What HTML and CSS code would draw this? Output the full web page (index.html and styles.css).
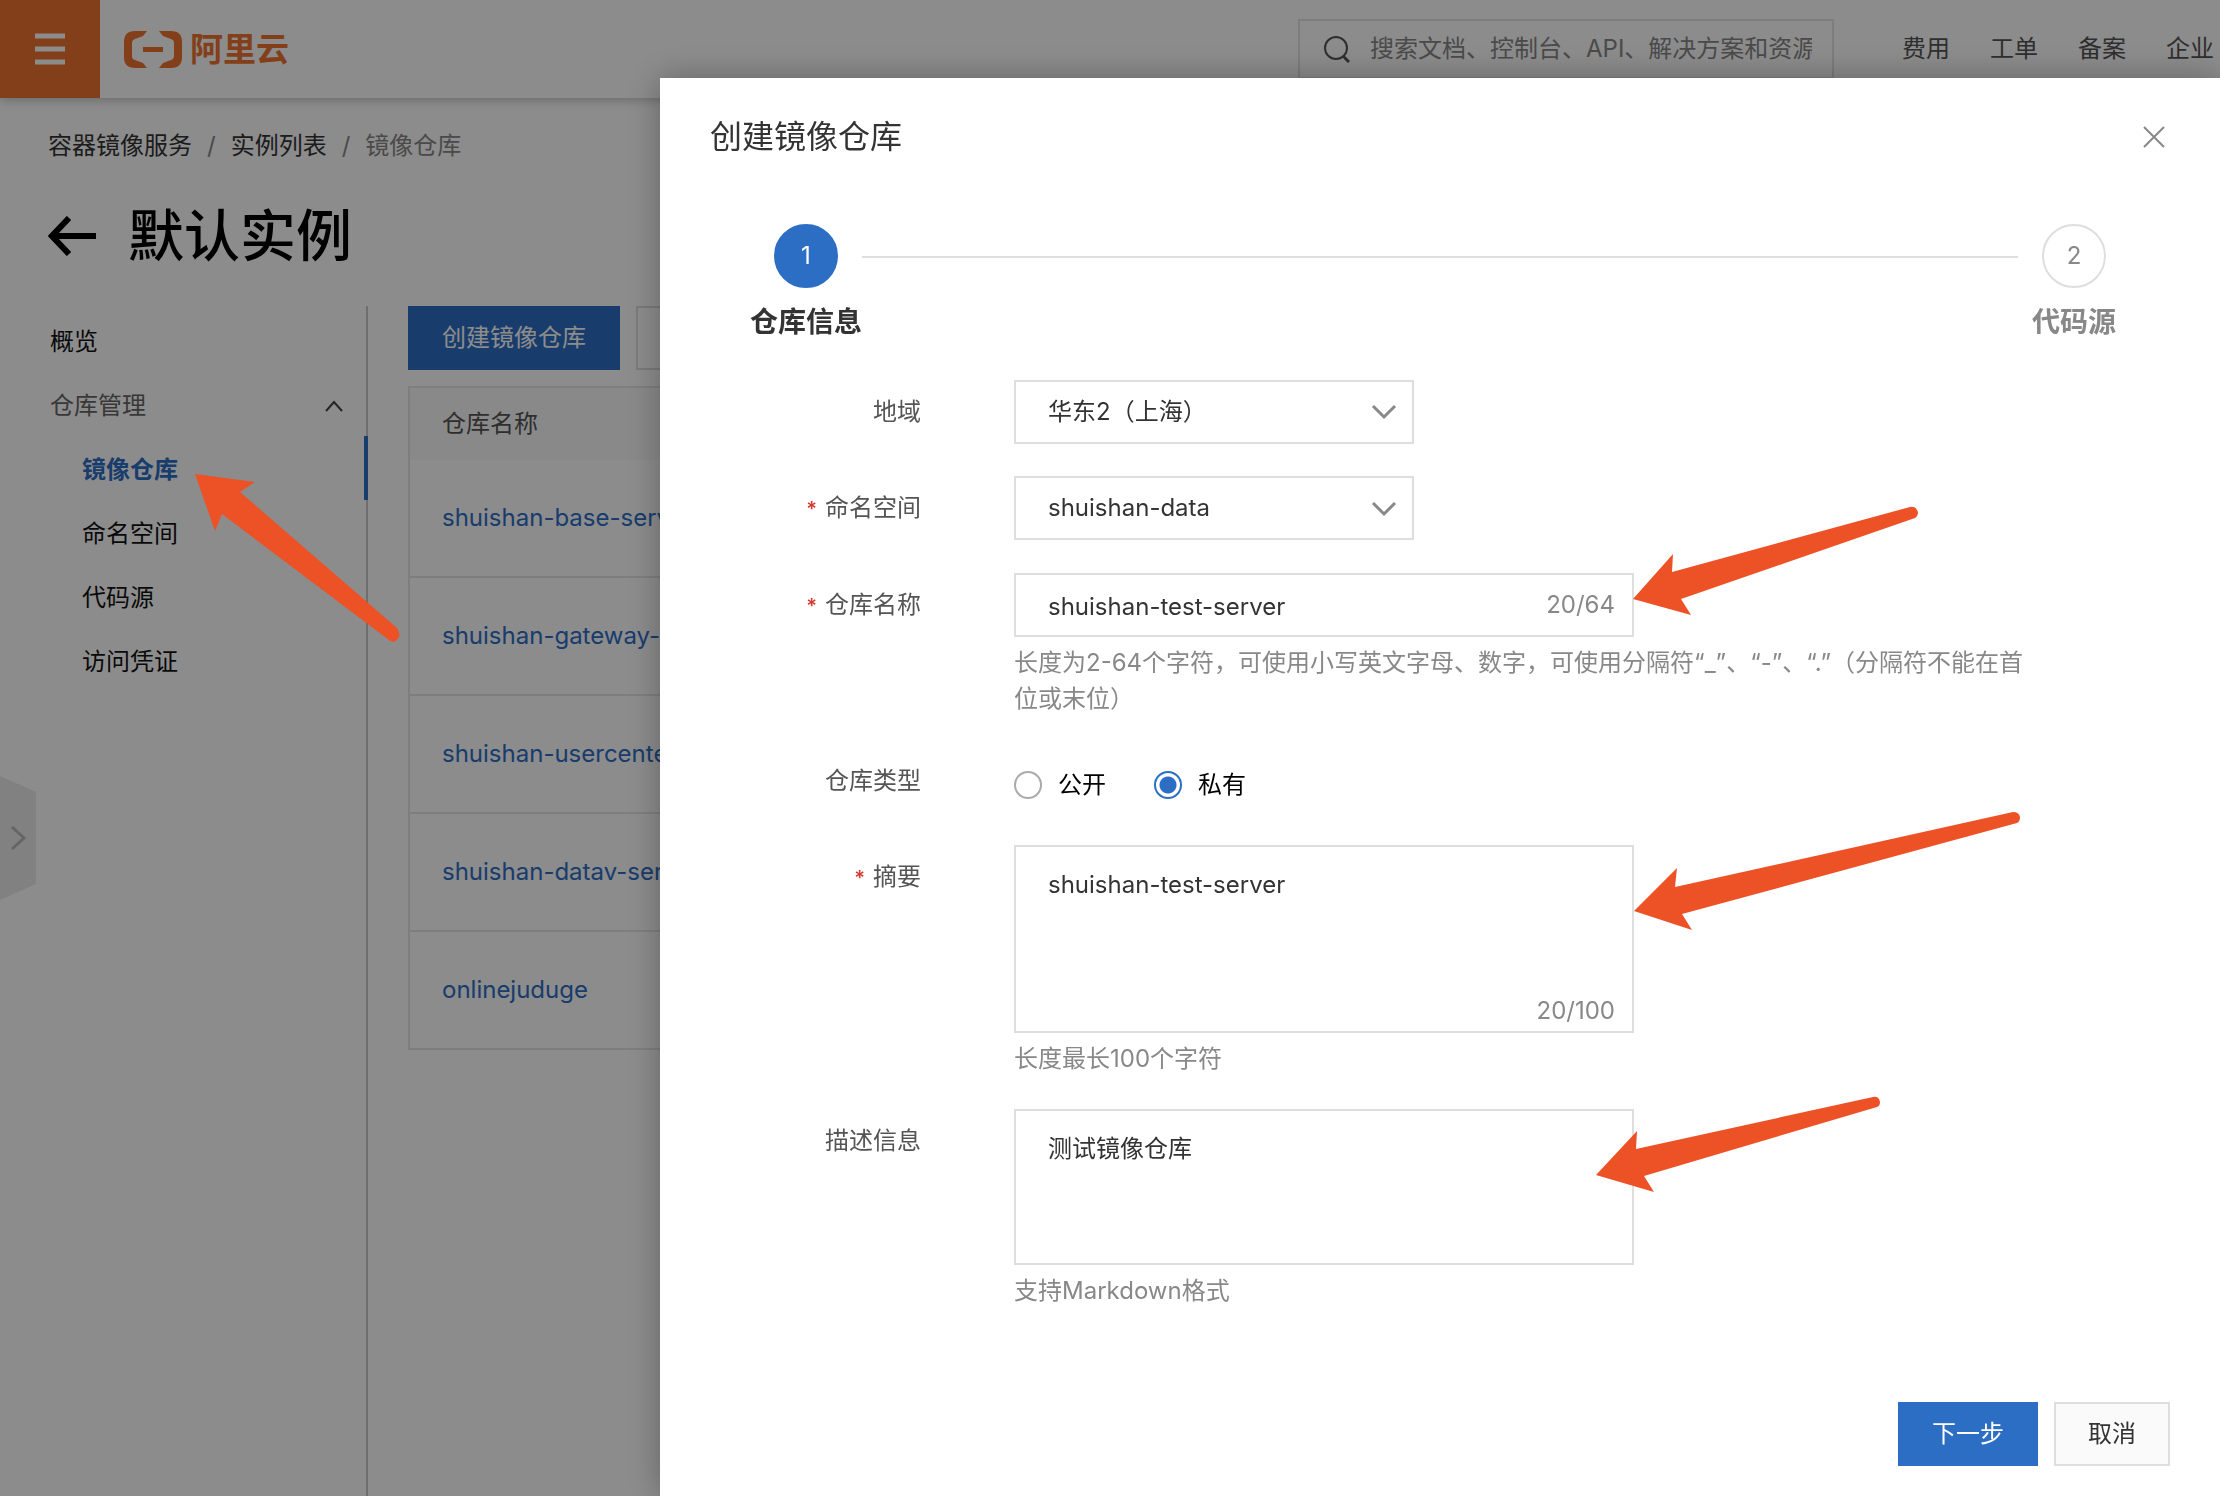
FILE: index.html
```html
<!DOCTYPE html>
<html lang="zh-CN">
<head>
<meta charset="utf-8">
<title>创建镜像仓库</title>
<link rel="stylesheet" href="styles.css">
</head>
<body>
<div class="page">
  <header class="topbar">
    <button class="menu-btn" type="button" aria-label="菜单">
      <svg width="30" height="32" viewBox="0 0 30 32"><path d="M0 3h30M0 16h30M0 29h30" stroke="#fff" stroke-width="5"/></svg>
    </button>
    <a class="logo" href="#">
      <svg width="58" height="37" viewBox="0 0 58 37" fill="#ee7431"><path d="M23 0H11Q0 0 0 11V26Q0 37 11 37H23L19 32L11 29Q8 28 8 25V12Q8 9 11 8L19 5Z"/><path d="M35 0H47Q58 0 58 11V26Q58 37 47 37H35L39 32L47 29Q50 28 50 25V12Q50 9 47 8L39 5Z"/><path d="M19 16h20v5H19z"/></svg>
      <span>阿里云</span>
    </a>
    <label class="search">
      <svg width="26" height="28" viewBox="0 0 26 28" fill="none" stroke="#555" stroke-width="2"><circle cx="12" cy="13" r="11"/><path d="M19 21l6 6" stroke-width="3"/></svg>
      <input type="text" aria-label="搜索" placeholder="搜索文档、控制台、API、解决方案和资源">
    </label>
    <nav class="topnav">
      <a href="#">费用</a><a href="#">工单</a><a href="#">备案</a><a href="#">企业</a>
    </nav>
  </header>

  <nav class="crumbs">
    <a href="#">容器镜像服务</a><span>/</span><a href="#">实例列表</a><span>/</span><span>镜像仓库</span>
  </nav>
  <div class="heading">
    <a href="#" aria-label="返回"><svg width="48" height="40" viewBox="0 0 48 40" fill="none" stroke="#000" stroke-width="6"><path d="M21 2L4 20L21 38M4 20H48"/></svg></a>
    <h1>默认实例</h1>
  </div>

  <div class="body">
    <nav class="side">
      <a href="#">概览</a>
      <a href="#" class="group">仓库管理
        <svg width="18" height="12" viewBox="0 0 18 12" fill="none" stroke="#444" stroke-width="2"><path d="M1 11L9 2L17 11"/></svg>
      </a>
      <a href="#" class="sub active">镜像仓库</a>
      <a href="#" class="sub">命名空间</a>
      <a href="#" class="sub">代码源</a>
      <a href="#" class="sub">访问凭证</a>
    </nav>
    <main class="content">
      <div class="actions">
        <button class="btn primary" type="button">创建镜像仓库</button>
        <button class="btn ghost" type="button" aria-label="更多操作"></button>
      </div>
      <table class="repos">
        <thead><tr><th>仓库名称</th></tr></thead>
        <tbody>
          <tr><td><a href="#">shuishan-base-server</a></td></tr>
          <tr><td><a href="#">shuishan-gateway-server</a></td></tr>
          <tr><td><a href="#">shuishan-usercenter</a></td></tr>
          <tr><td><a href="#">shuishan-datav-server</a></td></tr>
          <tr><td><a href="#">onlinejuduge</a></td></tr>
        </tbody>
      </table>
    </main>
  </div>
  <button class="side-tab" type="button" aria-label="展开">
    <svg width="36" height="124" viewBox="0 0 36 124"><path d="M0 0L36 16V108L0 124Z" fill="#ebebeb"/><path d="M12 51L24 62L12 73" fill="none" stroke="#b8b8b8" stroke-width="3"/></svg>
  </button>
</div>

<div class="mask">
  <section class="drawer" role="dialog" aria-label="创建镜像仓库">
    <div class="drawer-head">
      <h2>创建镜像仓库</h2>
      <button class="close" type="button" aria-label="关闭"><svg width="22" height="22" viewBox="0 0 22 22" stroke="#888" stroke-width="2"><path d="M1 1L21 21M21 1L1 21"/></svg></button>
    </div>
    <div class="steps">
      <div class="step current"><span class="dot">1</span><span>仓库信息</span></div>
      <div class="line"></div>
      <div class="step"><span class="dot">2</span><span>代码源</span></div>
    </div>
    <form class="form">
      <div class="row">
        <label class="name" for="region">地域</label>
        <div class="pick">
          <select id="region"><option>华东2（上海）</option></select>
          <svg width="26" height="16" viewBox="0 0 26 16" fill="none" stroke="#888" stroke-width="3"><path d="M2 2L13 13L24 2"/></svg>
        </div>
      </div>
      <div class="row">
        <label class="name required" for="space">命名空间</label>
        <div class="pick">
          <select id="space"><option>shuishan-data</option></select>
          <svg width="26" height="16" viewBox="0 0 26 16" fill="none" stroke="#888" stroke-width="3"><path d="M2 2L13 13L24 2"/></svg>
        </div>
      </div>
      <div class="row">
        <label class="name required" for="repo">仓库名称</label>
        <div>
          <div class="box"><input id="repo" type="text" value="shuishan-test-server"><span class="count">20/64</span></div>
          <p class="help">长度为2-64个字符，可使用小写英文字母、数字，可使用分隔符“_”、“-”、“.”（分隔符不能在首位或末位）</p>
        </div>
      </div>
      <div class="row">
        <span class="name">仓库类型</span>
        <div class="radios">
          <label><input type="radio" name="kind">公开</label>
          <label><input type="radio" name="kind" checked>私有</label>
        </div>
      </div>
      <div class="row">
        <label class="name required" for="brief">摘要</label>
        <div>
          <div class="box"><textarea id="brief" class="tall">shuishan-test-server</textarea><span class="count">20/100</span></div>
          <p class="help">长度最长100个字符</p>
        </div>
      </div>
      <div class="row">
        <label class="name" for="desc">描述信息</label>
        <div>
          <div class="box"><textarea id="desc">测试镜像仓库</textarea></div>
          <p class="help">支持Markdown格式</p>
        </div>
      </div>
    </form>
    <div class="drawer-foot">
      <button class="btn primary" type="button">下一步</button>
      <button class="btn plain" type="button">取消</button>
    </div>
  </section>
</div>

<svg class="marks" width="2220" height="1496" viewBox="0 0 2220 1496" fill="#ed5126" aria-hidden="true">
  <path d="M195 474L255 482L240 492L397 628Q403 637 394 642Q391 642 389 640L222 514L215 531Z"/>
  <path d="M1633 599L1673 554L1672 572L1910 507Q1916 506 1918 512Q1918 516 1915 518L1681 599L1691 615Z"/>
  <path d="M1634 911L1677 868L1675 887L2013 812Q2019 812 2020 817Q2020 822 2017 823L1682 914L1692 930Z"/>
  <path d="M1596 1175L1637 1131L1636 1149L1873 1097Q1879 1096 1880 1102Q1880 1106 1877 1107L1644 1176L1654 1192Z"/>
</svg>
</body>
</html>
```
FILE: styles.css
```css
* { box-sizing: border-box; }
body {
  margin: 0;
  overflow: hidden;
  background: #fff;
  color: #333;
  font-family: Inter, "Noto Sans CJK SC", sans-serif;
  font-size: 24px;
  line-height: 36px;
  text-spacing-trim: space-all;
}
a { color: inherit; text-decoration: none; }
button, input, select, textarea { font: inherit; color: inherit; margin: 0; }
button { border: 0; background: none; padding: 0; }
h1, h2, p { margin: 0; }
svg { display: block; flex: none; }

.page { display: flex; flex-direction: column; min-height: 100vh; }

.topbar {
  display: flex;
  align-items: center;
  height: 98px;
  padding-right: 6px;
  box-shadow: 0 2px 10px rgba(0, 0, 0, .25);
}
.menu-btn {
  display: grid;
  place-items: center;
  width: 100px;
  height: 98px;
  background: #ee7431;
}
.logo {
  display: flex;
  align-items: center;
  gap: 8px;
  margin-left: 24px;
  color: #ee7431;
  font-size: 33px;
  font-weight: 700;
}
.search {
  display: flex;
  align-items: center;
  gap: 20px;
  width: 536px;
  height: 60px;
  margin: 0 68px 0 auto;
  padding: 0 20px 0 24px;
  border: 2px solid #e3e3e3;
}
.search input { flex: 1; min-width: 0; padding: 0; border: 0; background: none; }
.search input::placeholder { color: #888; opacity: 1; }
.topnav { display: flex; gap: 40px; color: #555; }

.crumbs { display: flex; gap: 15px; padding: 30px 48px 0; }
.crumbs span { color: #888; }
.heading { display: flex; align-items: center; gap: 32px; padding: 36px 48px 34px; color: #000; }
.heading h1 { font-size: 56px; font-weight: 500; line-height: 72px; }

.body { display: flex; flex: 1; }
.side { width: 368px; padding-top: 2px; border-right: 2px solid #c8c8c8; color: #111; flex: none; }
.side a {
  display: flex;
  align-items: center;
  justify-content: space-between;
  height: 64px;
  padding: 4px 23px 0 50px;
}
.side .group { color: #666; }
.side .sub { padding-left: 82px; }
.side .active {
  margin-right: -2px;
  border-right: 4px solid #2d6ec5;
  color: #2d6ec5;
  font-weight: 700;
}

.content { flex: 1; padding-left: 40px; }
.actions { display: flex; gap: 16px; margin-bottom: 16px; }
.btn { height: 64px; padding: 0 34px; }
.primary { background: #2d6ec5; color: #fff; }
.ghost { width: 150px; border: 2px solid #dedede; }
.plain { padding: 0 32px; border: 2px solid #dedede; background: #fafafa; }

.repos { width: 100%; border-collapse: separate; border-spacing: 0; border: 2px solid #e6e6e6; }
.repos th, .repos td { padding: 0 32px; text-align: left; font-weight: 400; }
.repos th { height: 72px; background: #fafafa; color: #555; }
.repos td { height: 118px; border-bottom: 2px solid #e6e6e6; color: #2d6ec5; }
.repos tr:last-child td { height: 116px; border-bottom: 0; }

.side-tab { position: absolute; left: 0; top: 776px; }

.mask {
  position: fixed;
  inset: 0;
  display: flex;
  padding: 78px 0 0 660px;
  background: rgba(0, 0, 0, .45);
}
.drawer {
  display: flex;
  flex: 1;
  flex-direction: column;
  background: #fff;
  box-shadow: 0 0 32px rgba(0, 0, 0, .3);
}
.drawer-head {
  display: flex;
  align-items: center;
  justify-content: space-between;
  padding: 35px 55px 37px 50px;
}
.drawer-head h2 { font-size: 32px; font-weight: 400; line-height: 48px; }

.steps { display: grid; grid-template-columns: 112px 1fr 112px; padding: 26px 90px 40px; }
.step {
  display: flex;
  flex-direction: column;
  align-items: center;
  gap: 16px;
  color: #888;
  font-size: 28px;
  font-weight: 700;
}
.dot {
  display: grid;
  place-items: center;
  width: 64px;
  height: 64px;
  border: 2px solid #dedede;
  border-radius: 50%;
  font-size: 24px;
  font-weight: 400;
}
.current { color: #333; }
.current .dot { border-color: #2d6ec5; background: #2d6ec5; color: #fff; }
.line { height: 2px; margin-top: 32px; background: #dedede; }

.form { display: flex; flex-direction: column; gap: 32px; padding-right: 180px; }
.row { display: grid; grid-template-columns: 261px 1fr; column-gap: 93px; }
.name { line-height: 64px; color: #555; text-align: right; }
.required::before { content: "*"; margin-right: 8px; color: #d33a2c; font-size: 20px; font-weight: 600; }

.pick, .box { display: grid; }
.pick { width: 400px; }
.box { width: 620px; }
.pick > *, .box > * { grid-area: 1 / 1; }
.pick select, .box input, .box textarea {
  width: 100%;
  border: 2px solid #dedede;
  border-radius: 0;
  background: #fff;
  outline: 0;
}
.pick select { appearance: none; height: 64px; padding: 0 32px; }
.pick svg { place-self: center end; margin-right: 17px; pointer-events: none; }
.box input { height: 64px; padding: 2px 120px 0 32px; }
.box textarea { display: block; height: 156px; padding: 20px 32px; resize: none; }
.box .tall { height: 188px; }
.count { place-self: end; padding: 0 19px 14px 0; color: #888; line-height: 36px; }
.box .tall + .count { padding-bottom: 4px; }
.help { padding-top: 8px; color: #888; }

.radios { display: flex; align-items: center; gap: 48px; padding-top: 8px; color: #000; }
.radios label { display: flex; align-items: center; gap: 16px; }
.radios input {
  appearance: none;
  width: 28px;
  height: 28px;
  border: 2px solid #aaa;
  border-radius: 50%;
}
.radios input:checked {
  border-color: #2d6ec5;
  background: radial-gradient(circle, #2d6ec5 8px, #fff 9px);
}

.drawer-foot { display: flex; justify-content: flex-end; gap: 16px; margin-top: auto; padding: 30px 50px; }

.marks { position: absolute; left: 0; top: 0; pointer-events: none; }
```
